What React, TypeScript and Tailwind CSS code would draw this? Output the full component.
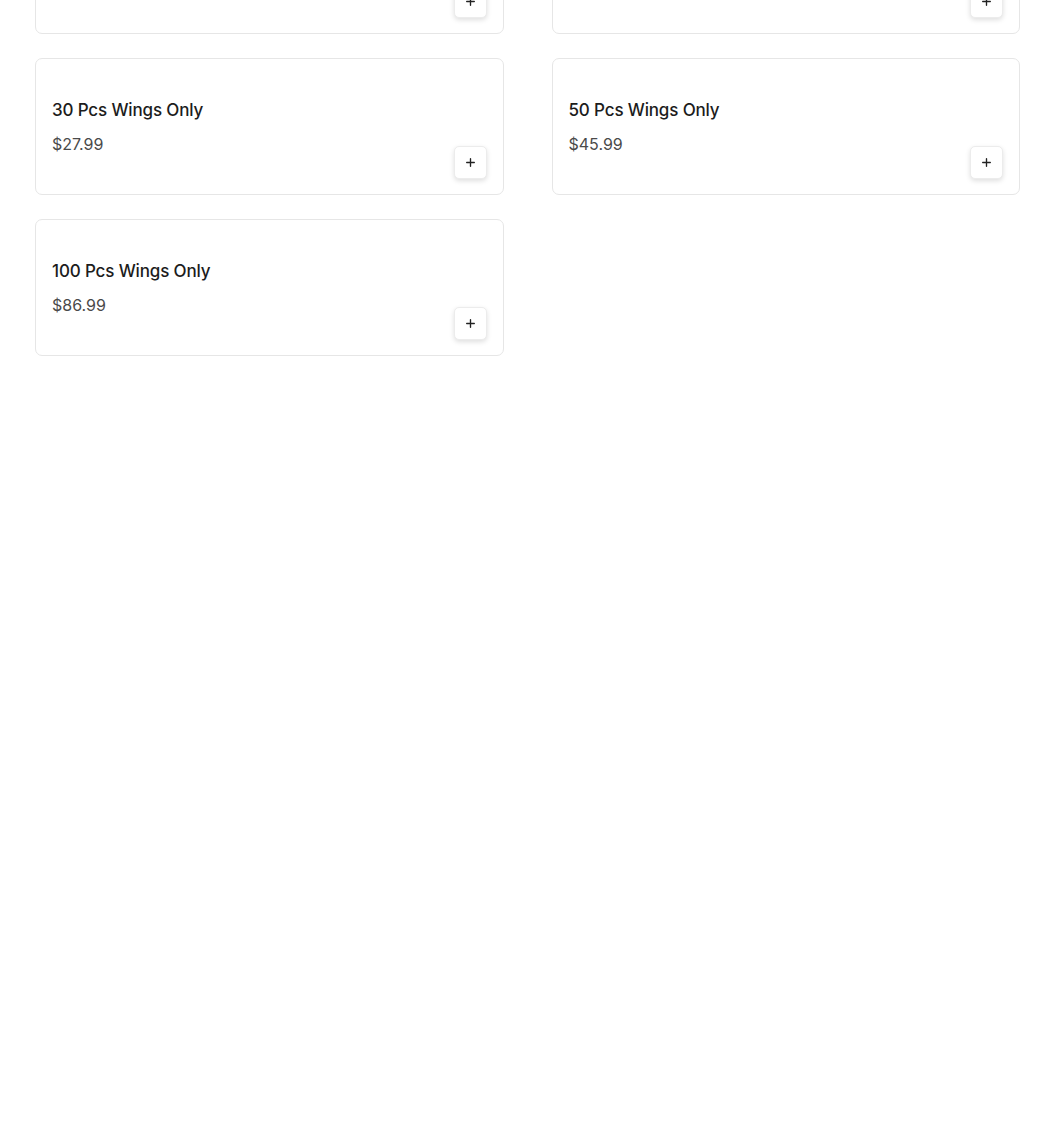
import React from 'react';
import { Plus } from 'lucide-react';

interface Item {
  name: string;
  price: string;
}

const items: Item[] = [
  { name: '30 Pcs Wings Only', price: '$27.99' },
  { name: '50 Pcs Wings Only', price: '$45.99' },
  { name: '100 Pcs Wings Only', price: '$86.99' },
];

const AddButton: React.FC<{ label: string }> = ({ label }) => (
  <button
    className="w-[33px] h-[33px] flex items-center justify-center bg-white border border-[#ececec] rounded-[5px] shadow-[0_2px_5px_rgba(0,0,0,0.13)] text-[#222]"
    aria-label={label}
  >
    <Plus size={13} strokeWidth={2.5} />
  </button>
);

const MenuCard: React.FC<{ item?: Item }> = ({ item }) => (
  <div className="h-[137px] bg-white border border-[#e6e6e6] rounded-[7px] px-4 pt-4 pb-[15px] flex justify-between items-end">
    <div className="self-start pt-[23px]">
      {item && (
        <>
          <h3 className="text-[17px] leading-6 font-medium text-[#1c1c1c] tracking-[-0.15px]">{item.name}</h3>
          <p className="mt-3 text-[16px] leading-5 text-[#4a4a4a]">{item.price}</p>
        </>
      )}
    </div>
    <AddButton label={item ? `Add ${item.name}` : 'Add'} />
  </div>
);

export default function App() {
  return (
    <div className="h-screen overflow-hidden bg-white font-[Inter,sans-serif]">
      <div className="-mt-[103px] pl-[35px] pr-[30px] grid grid-cols-2 gap-x-[48px] gap-y-[24px]">
        {/* row scrolled above the viewport */}
        <MenuCard />
        <MenuCard />
        {items.map((item) => (
          <MenuCard key={item.name} item={item} />
        ))}
      </div>
    </div>
  );
}
